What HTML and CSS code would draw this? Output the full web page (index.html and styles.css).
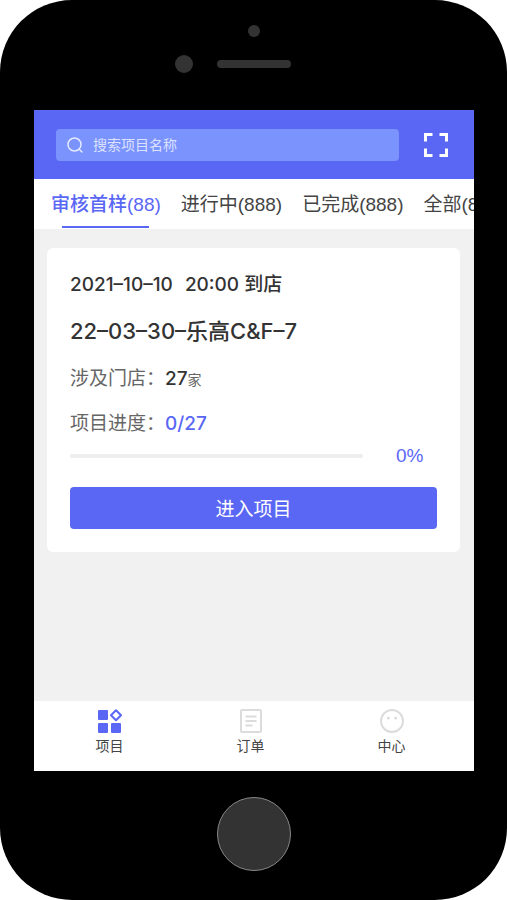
FILE: index.html
```
<!DOCTYPE html>
<html lang="zh-CN">
  <head>
    <meta charset="utf-8">
    <meta name="viewport" content="width=device-width, initial-scale=1">
    <title>项目</title>
    <link rel="stylesheet" href="styles.css">
  </head>
  <body>
    <div class="phone">
      <div class="phone-top">
        <span class="camera"></span>
        <div class="speaker-row">
          <span class="sensor"></span>
          <span class="speaker"></span>
        </div>
      </div>

      <div class="screen">
        <header class="header">
          <label class="search">
            <svg class="search-icon" viewBox="0 0 16 16" aria-hidden="true">
              <circle cx="7.5" cy="7.5" r="6.5"/>
              <path d="M12.200 12.200l2.800 2.800"/>
            </svg>
            <input type="text" aria-label="搜索项目名称" placeholder="搜索项目名称">
          </label>
          <button class="scan" type="button" aria-label="扫码">
            <svg viewBox="0 0 24 24" aria-hidden="true">
              <path d="M1.5 8.5v-7h7M15.5 1.5h7v7M22.5 15.5v7h-7M8.5 22.5h-7v-7"/>
            </svg>
          </button>
        </header>

        <div class="tabs">
          <button class="tab active" type="button">审核首样(88)</button>
          <button class="tab" type="button">进行中(888)</button>
          <button class="tab" type="button">已完成(888)</button>
          <button class="tab" type="button">全部(888)</button>
        </div>

        <main class="content">
          <div class="card">
            <p class="date"><span>2021–10–10</span> <span>20:00 到店</span></p>
            <h2 class="title">22–03–30–乐高C&amp;F–7</h2>
            <p class="row">涉及门店：<b>27</b><small>家</small></p>
            <p class="row">项目进度：<b class="blue">0/27</b></p>
            <div class="progress-row">
              <progress value="0" max="27" aria-label="项目进度"></progress>
              <span class="percent">0%</span>
            </div>
            <button class="enter" type="button">进入项目</button>
          </div>
        </main>

        <nav class="navbar">
          <a class="nav-item" href="#project">
            <svg viewBox="0 0 24 24" aria-hidden="true">
              <g fill="#5a67f5">
                <rect x="0" y="1" width="10" height="10" rx="1"/>
                <rect x="0" y="14" width="10" height="10" rx="1"/>
                <rect x="13" y="14" width="10" height="10" rx="1"/>
              </g>
              <path d="M18 1.200l5 5-5 5-5-5z" fill="none" stroke="#5a67f5" stroke-width="2" stroke-linejoin="round"/>
            </svg>
            项目
          </a>
          <a class="nav-item" href="#order">
            <svg viewBox="0 0 24 24" fill="none" stroke="#dcdcdc" stroke-width="2" aria-hidden="true">
              <rect x="2" y="1" width="20" height="22" rx="1"/>
              <path d="M6.500 7.500h11M6.500 12h11M6.500 16.500h7"/>
            </svg>
            订单
          </a>
          <a class="nav-item" href="#center">
            <svg viewBox="0 0 24 24" aria-hidden="true">
              <circle cx="12" cy="12" r="11" fill="none" stroke="#dcdcdc" stroke-width="2"/>
              <circle cx="8.300" cy="9" r="1.500" fill="#dcdcdc"/>
              <circle cx="15.700" cy="9" r="1.500" fill="#dcdcdc"/>
            </svg>
            中心
          </a>
        </nav>
      </div>

      <div class="phone-bottom">
        <button class="home" type="button" aria-label="Home"></button>
      </div>
    </div>
  </body>
</html>
```
FILE: styles.css
```
* {
  box-sizing: border-box;
}
body {
  margin: 0;
  background-color: #ffffff;
  font-family: "Liberation Sans", "Noto Sans CJK SC", sans-serif;
  color: #333333;
}
button, input {
  font-family: inherit;
  padding: 0;
  border: 0;
  background: none;
}
p, h2 {
  margin: 0;
}

/* phone body */
.phone {
  display: flex;
  flex-direction: column;
  min-height: 100vh;
  padding: 0 33px 0 34px;
  border-radius: 72px;
  background-color: #000000;
}
.phone-top {
  display: flex;
  flex-direction: column;
  align-items: center;
  height: 110px;
  padding-top: 25px;
}
.camera {
  width: 12px;
  height: 12px;
  border-radius: 50%;
  background-color: #333333;
}
.speaker-row {
  display: grid;
  grid-template-columns: 1fr 74px 1fr;
  align-items: center;
  column-gap: 24px;
  width: 100%;
  margin-top: 18px;
}
.sensor {
  justify-self: end;
  width: 18px;
  height: 18px;
  border-radius: 50%;
  background-color: #333333;
}
.speaker {
  height: 8px;
  border-radius: 4px;
  background-color: #333333;
}
.phone-bottom {
  display: flex;
  justify-content: center;
  height: 129px;
  padding-top: 26px;
}
.home {
  width: 74px;
  height: 74px;
  border: 1px solid #888888;
  border-radius: 50%;
  background-color: #333333;
}

/* screen */
.screen {
  display: flex;
  flex: 1;
  flex-direction: column;
  min-width: 0;
  background-color: #f1f1f1;
}
.header {
  display: flex;
  align-items: center;
  gap: 25px;
  height: 69px;
  padding: 0 26px 0 22px;
  background-color: #5a67f5;
}
.search {
  display: flex;
  flex: 1;
  align-items: center;
  gap: 10px;
  height: 32px;
  padding: 0 11px;
  border-radius: 4px;
  background-color: #7b93fd;
}
.search-icon {
  width: 16px;
  height: 16px;
  fill: none;
  stroke: #e4e9ff;
  stroke-width: 1.5;
  stroke-linecap: round;
}
.search input {
  flex: 1;
  min-width: 0;
  color: #ffffff;
  font-size: 14px;
  outline: none;
}
.search input::placeholder {
  color: #dbe2ff;
  opacity: 1;
}
.scan {
  width: 24px;
  height: 24px;
}
.scan svg {
  display: block;
  fill: none;
  stroke: #ffffff;
  stroke-width: 3;
}

.tabs {
  display: flex;
  gap: 20px;
  height: 50px;
  padding: 0 17px;
  overflow: hidden;
  background-color: #ffffff;
}
.tab {
  position: relative;
  flex-shrink: 0;
  padding-bottom: 3px;
  color: #444444;
  font-size: 19px;
  white-space: nowrap;
}
.tab.active {
  color: #5a67f5;
  font-weight: 500;
}
.tab.active::after {
  content: "";
  position: absolute;
  right: 12px;
  bottom: 1px;
  left: 11px;
  height: 2px;
  background-color: #5a67f5;
}

.content {
  flex: 1;
  padding: 19px 14px 19px 13px;
}
.card {
  padding: 23px;
  border-radius: 6px;
  background-color: #ffffff;
}
.date {
  display: flex;
  gap: 12px;
  font-family: Inter, "Noto Sans CJK SC", sans-serif;
  font-size: 19px;
  font-weight: 500;
  line-height: 28px;
}
.title {
  margin-top: 16px;
  font-family: Inter, "Noto Sans CJK SC", sans-serif;
  font-size: 22px;
  font-weight: 500;
  line-height: 32px;
}
.row {
  margin-top: 16px;
  color: #666666;
  font-size: 19px;
  line-height: 28px;
}
.title + .row {
  margin-top: 18px;
}
.row b {
  color: #333333;
  font-family: Inter, sans-serif;
  font-size: 19px;
  font-weight: 500;
}
.row .blue {
  color: #5a67f5;
}
.row small {
  font-size: 14px;
}
.progress-row {
  display: flex;
  align-items: center;
  gap: 33px;
  margin-top: 6px;
}
progress {
  flex: 1;
  height: 4px;
  border: 0;
  border-radius: 2px;
  background-color: #eeeeee;
  appearance: none;
}
progress::-webkit-progress-bar {
  border-radius: 2px;
  background-color: #eeeeee;
}
progress::-webkit-progress-value {
  background-color: #5a67f5;
}
.percent {
  width: 41px;
  color: #5a67f5;
  font-size: 19px;
  line-height: 24px;
}
.enter {
  width: 100%;
  height: 42px;
  margin-top: 19px;
  padding-bottom: 2px;
  border-radius: 4px;
  background-color: #5a67f5;
  color: #ffffff;
  font-size: 19px;
}

.navbar {
  display: grid;
  grid-template-columns: repeat(3, 1fr);
  height: 70px;
  padding: 8px 12px 0 5px;
  background-color: #ffffff;
}
.nav-item {
  display: flex;
  flex-direction: column;
  align-items: center;
  gap: 3px;
  color: #444444;
  font-size: 14px;
  line-height: 20px;
  text-decoration: none;
}
.nav-item svg {
  width: 24px;
  height: 24px;
}
```
